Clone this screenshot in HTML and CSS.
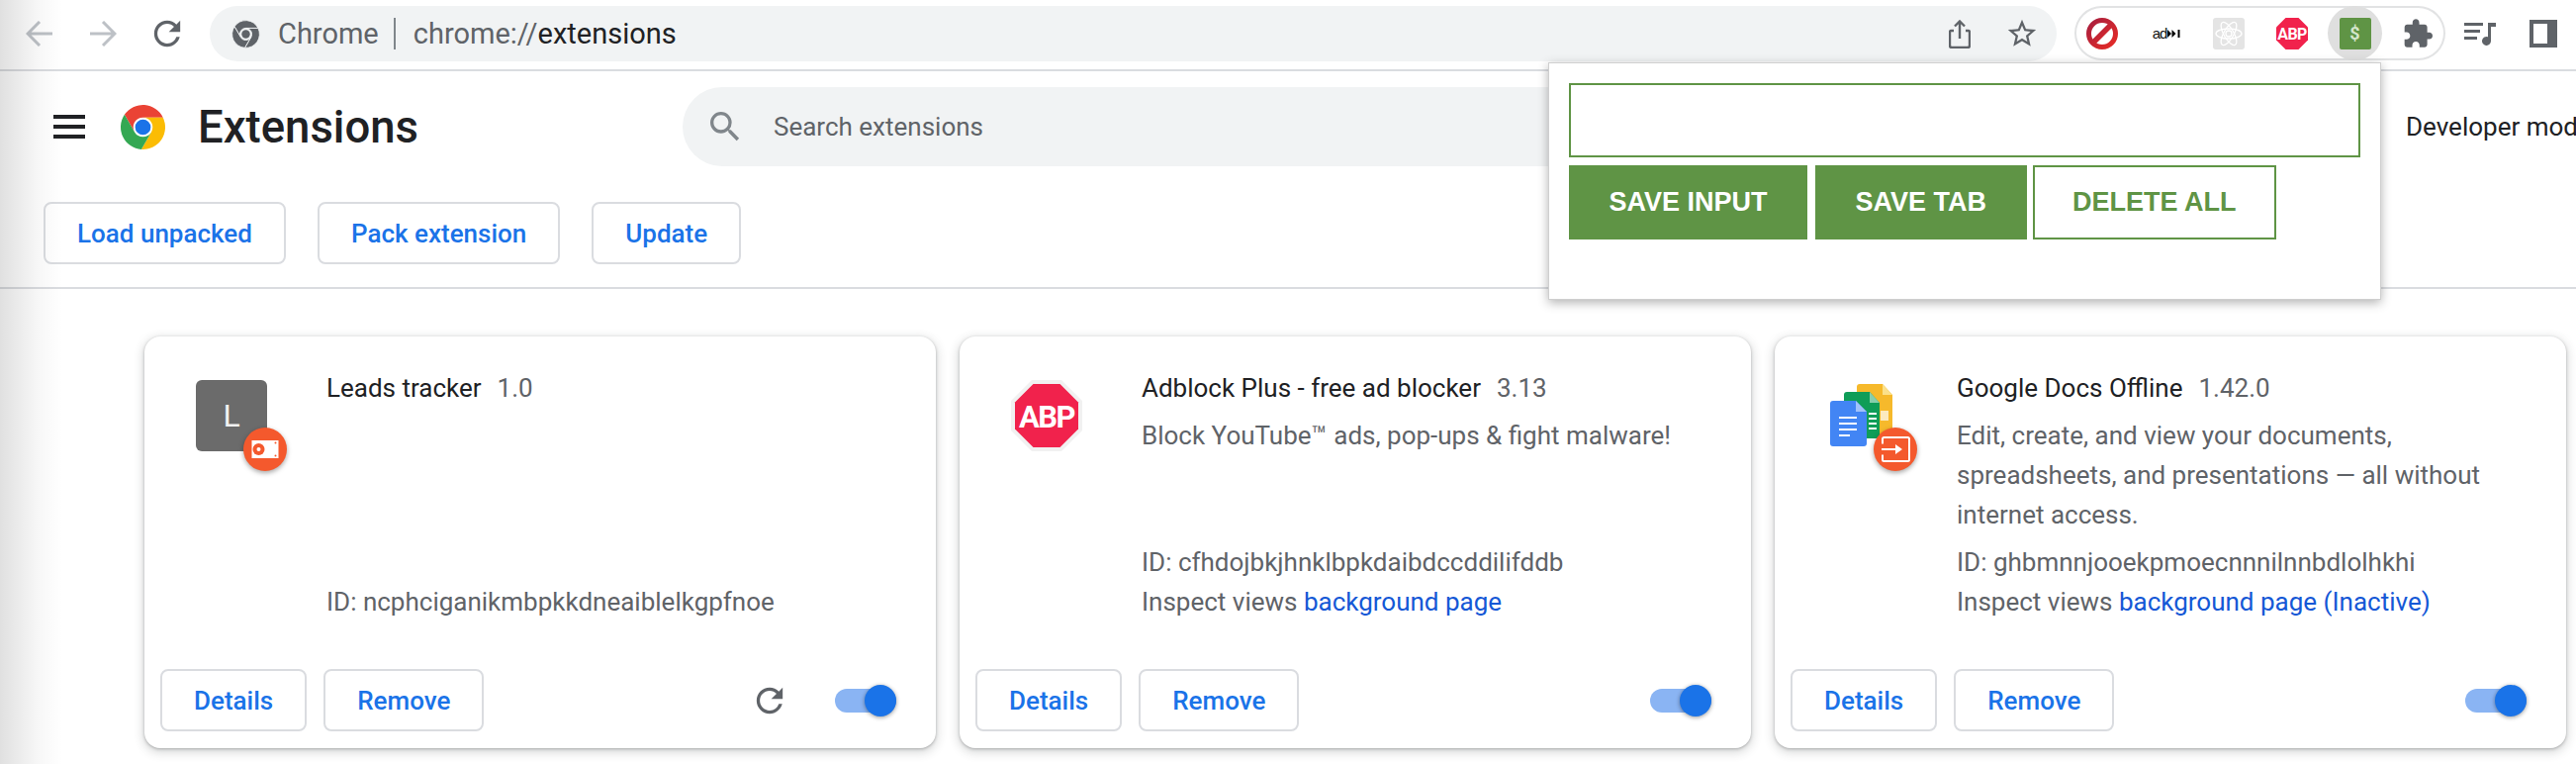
FILE: index.html
```html
<!DOCTYPE html>
<html lang="en">
<head>
<meta charset="utf-8">
<title>Extensions</title>
<link rel="stylesheet" href="styles.css">
</head>
<body>
<div class="edge-shade"></div>

<div class="browser-bar">
  <svg class="nav-icon" viewBox="0 0 28 26"><path class="nav-off" d="M27 13H2M14 1 2 13l12 12"/></svg>
  <svg class="nav-icon nav-forward" viewBox="0 0 28 26"><path class="nav-off" d="M1 13h25M14 1l12 12-12 12"/></svg>
  <svg class="nav-reload" viewBox="3.5 3.5 17 17"><path class="ico" d="M17.65 6.35A7.958 7.958 0 0 0 12 4c-4.42 0-7.99 3.58-7.99 8s3.57 8 7.99 8c3.73 0 6.84-2.55 7.73-6h-2.08A5.99 5.99 0 0 1 12 18c-3.31 0-6-2.69-6-6s2.69-6 6-6c1.66 0 3.14.69 4.22 1.78L13 11h7V4l-2.35 2.35z"/></svg>
  <div class="omnibox">
    <svg class="omni-logo" viewBox="0 0 48 48">
      <path class="omni-seg" d="M5 11.07A23 23 0 0 1 44.7 14H24a10 10 0 0 0-8.66 15z"/>
      <path class="omni-seg" d="M44.7 14A23 23 0 0 1 22.31 46.93L32.66 29A10 10 0 0 0 24 14z"/>
      <path class="omni-seg" d="M22.31 46.93A23 23 0 0 1 5 11.07L15.34 29a10 10 0 0 0 17.32 0z"/>
      <circle class="ico" cx="24" cy="24" r="7"/>
    </svg>
    <span class="omni-site">Chrome</span>
    <span class="omni-sep"></span>
    <span class="omni-url">chrome://<span class="omni-path">extensions</span></span>
    <svg class="omni-share" viewBox="0 0 22 29"><path class="ico-line" d="M5 11H2.5A1.5 1.5 0 0 0 1 12.500V26a2 2 0 0 0 2 2h16a2 2 0 0 0 2-2V12.500A1.500 1.500 0 0 0 19.500 11H17M11 19V2M6 6.500 11 1.500l5 5"/></svg>
    <svg class="omni-star" viewBox="0 0 24 24"><path class="ico" d="m22 9.240-7.190-.62L12 2 9.190 8.630 2 9.240l5.460 4.730L5.820 21 12 17.270 18.180 21l-1.630-7.030L22 9.240zM12 15.400l-3.760 2.270 1-4.280-3.320-2.880 4.380-.38L12 6.100l1.710 4.040 4.380.38-3.320 2.880 1 4.280L12 15.400z"/></svg>
  </div>
  <div class="ext-pill">
    <div class="ext-slot">
      <svg class="ext-icon" viewBox="0 0 32 32">
        <defs><linearGradient id="stopGrad" x1="0" y1="0" x2="1" y2="1"><stop offset="0" stop-color="#a81f3e"/><stop offset="1" stop-color="#e62b26"/></linearGradient></defs>
        <circle cx="16" cy="16" r="13.500" fill="#fff" stroke="url(#stopGrad)" stroke-width="5"/>
        <path d="M7 25 25 7" stroke="url(#stopGrad)" stroke-width="5.500"/>
      </svg>
    </div>
    <div class="ext-slot">
      <span class="adskip">ad<svg class="adskip-arrows" viewBox="0 0 13 8"><path d="M0 0l4 4-4 4zM4.500 0l4 4-4 4zM10.500 0H12.500V8H10.500z"/></svg></span>
    </div>
    <div class="ext-slot">
      <svg class="ext-icon" viewBox="0 0 32 32">
        <rect width="32" height="32" rx="3" fill="#e4e4e4"/>
        <g class="atom"><ellipse cx="16" cy="16" rx="13" ry="5"/><ellipse cx="16" cy="16" rx="13" ry="5" transform="rotate(60 16 16)"/><ellipse cx="16" cy="16" rx="13" ry="5" transform="rotate(120 16 16)"/><circle cx="16" cy="16" r="3"/></g>
      </svg>
    </div>
    <div class="ext-slot">
      <svg class="ext-icon" viewBox="0 0 32 32"><path class="abp-red" d="M9.500 0h13L32 9.500v13L22.500 32h-13L0 22.500v-13z"/><text class="abp-text" x="16" y="22">ABP</text></svg>
    </div>
    <div class="ext-slot ext-slot-active">
      <span class="dollar-tile">$</span>
    </div>
    <div class="ext-slot">
      <svg class="puzzle" viewBox="1.500 1 21.500 21"><path class="ico" d="M20.500 11H19V7c0-1.100-.9-2-2-2h-4V3.500C13 2.120 11.880 1 10.500 1S8 2.120 8 3.500V5H4c-1.100 0-1.990.9-1.990 2v3.800H3.500c1.490 0 2.700 1.210 2.700 2.700s-1.210 2.700-2.700 2.700H2V20c0 1.100.9 2 2 2h3.800v-1.500c0-1.490 1.210-2.700 2.700-2.700 1.490 0 2.700 1.210 2.700 2.700V22H17c1.100 0 2-.9 2-2v-4h1.500c1.380 0 2.500-1.120 2.500-2.500S21.880 11 20.500 11z"/></svg>
    </div>
  </div>
  <svg class="media-icon" viewBox="0 0 32 24"><path class="ico" d="M0 1h19v3H0zM0 8h16v3H0zM0 15h13v3H0zM24 1h8v4h-5v14.500a4.500 4.500 0 1 1-3-4.240z"/></svg>
  <svg class="panel-icon" viewBox="0 0 28 28"><path class="ico" fill-rule="evenodd" d="M0 0h28v28H0zM4 4v20h14V4z"/></svg>
</div>

<header class="page-head">
  <div class="menu-bars"><span></span><span></span><span></span></div>
  <svg class="head-logo" viewBox="0 0 48 48">
    <path fill="#ea4335" d="M5 11.070A23 23 0 0 1 44.700 14H24a10 10 0 0 0-8.660 15z"/>
    <path fill="#fbbc04" d="M44.700 14A23 23 0 0 1 22.310 46.930L32.660 29A10 10 0 0 0 24 14z"/>
    <path fill="#34a853" d="M22.310 46.930A23 23 0 0 1 5 11.070L15.340 29a10 10 0 0 0 17.320 0z"/>
    <circle fill="#1a73e8" cx="24" cy="24" r="8"/>
  </svg>
  <h1 class="page-title">Extensions</h1>
  <div class="search-box">
    <svg class="search-icon" viewBox="3 3 18 18"><path class="search-path" d="M15.500 14h-.79l-.28-.27A6.470 6.470 0 0 0 16 9.500 6.500 6.500 0 1 0 9.500 16c1.610 0 3.090-.59 4.230-1.570l.27.28v.79l5 4.990L20.490 19l-4.990-5zm-6 0C7.010 14 5 11.990 5 9.500S7.010 5 9.500 5 14 7.010 14 9.500 11.990 14 9.500 14z"/></svg>
    <span class="search-text">Search extensions</span>
  </div>
  <span class="dev-mode">Developer mode</span>
</header>

<div class="action-row">
  <button class="btn">Load unpacked</button>
  <button class="btn">Pack extension</button>
  <button class="btn">Update</button>
</div>

<main class="card-row">
  <article class="card">
    <div class="card-main">
      <div class="card-icon">
        <div class="letter-tile">L</div>
        <span class="badge">
          <svg class="badge-svg" viewBox="0 0 44 44"><path fill="#fff" d="M8.500 13h27v18h-27z"/><circle cx="15.500" cy="22" r="6" fill="#f4592d"/><circle cx="15.500" cy="22" r="2" fill="#fff"/><circle cx="32.500" cy="15.500" r="1" fill="#f4592d"/><circle cx="32.500" cy="28.500" r="1" fill="#f4592d"/></svg>
        </span>
      </div>
      <div class="card-text">
        <div class="card-name"><span class="name">Leads tracker</span><span class="version">1.0</span></div>
        <div class="card-meta">
          <div>ID: ncphciganikmbpkkdneaiblelkgpfnoe</div>
        </div>
      </div>
    </div>
    <div class="card-foot">
      <button class="btn">Details</button>
      <button class="btn">Remove</button>
      <svg class="foot-reload" viewBox="3.500 3.500 17 17"><path class="ico" d="M17.650 6.350A7.958 7.958 0 0 0 12 4c-4.420 0-7.990 3.580-7.990 8s3.570 8 7.990 8c3.730 0 6.840-2.550 7.730-6h-2.080A5.990 5.990 0 0 1 12 18c-3.310 0-6-2.690-6-6s2.690-6 6-6c1.660 0 3.140.69 4.220 1.780L13 11h7V4l-2.350 2.350z"/></svg>
      <span class="toggle toggle-after-reload"><span class="toggle-knob"></span></span>
    </div>
  </article>

  <article class="card">
    <div class="card-main">
      <div class="card-icon">
        <svg class="abp-big" viewBox="0 0 72 72"><path fill="#f1f1f1" d="M21 0h30l21 21v30L51 72H21L0 51V21z"/><path class="abp-red" d="M22.500 4h27L68 22.500v27L49.500 68h-27L4 49.500v-27z"/><text class="abp-text-big" x="36" y="47.500">ABP</text></svg>
      </div>
      <div class="card-text">
        <div class="card-name"><span class="name">Adblock Plus - free ad blocker</span><span class="version">3.13</span></div>
        <div class="card-desc">Block YouTube™ ads, pop-ups &amp; fight malware!</div>
        <div class="card-meta">
          <div>ID: cfhdojbkjhnklbpkdaibdccddilifddb</div>
          <div>Inspect views <a class="link">background page</a></div>
        </div>
      </div>
    </div>
    <div class="card-foot">
      <button class="btn">Details</button>
      <button class="btn">Remove</button>
      <span class="toggle"><span class="toggle-knob"></span></span>
    </div>
  </article>

  <article class="card">
    <div class="card-main">
      <div class="card-icon">
        <svg class="docs-svg" viewBox="-4 0 72 72">
          <path fill="#f6b92b" d="M30 4h23l10 11v37a3 3 0 0 1-3 3H30a3 3 0 0 1-3-3V7a3 3 0 0 1 3-3z"/>
          <path fill="#fbe08a" d="M53 4l10 11H53z"/>
          <path fill="#fff" opacity=".7" d="M51 31h8v10h-8z"/>
          <path fill="#0f9d58" d="M17 12h23l10 11v33a3 3 0 0 1-3 3H17a3 3 0 0 1-3-3V15a3 3 0 0 1 3-3z"/>
          <path fill="#87ceac" d="M40 12l10 11H40z"/>
          <path fill="#fff" d="M39 33h8v2H39zM39 38h8v2H39zM39 43h8v2H39zM39 48h8v2H39z"/>
          <path fill="#4285f4" d="M3 21h23l11 11v32a3 3 0 0 1-3 3H3a3 3 0 0 1-3-3V24a3 3 0 0 1 3-3z"/>
          <path fill="#a1c2fa" d="M26 21l11 11H26z"/>
          <path fill="#fff" d="M9 37h18v2H9zM9 43h18v2H9zM9 49h18v2H9zM9 55h11v2H9z"/>
        </svg>
        <span class="badge">
          <svg class="badge-svg" viewBox="0 0 44 44"><path fill="none" stroke="#fff" stroke-width="2" d="M9 16.500V11.500A1.500 1.500 0 0 1 10.500 10h24a1.500 1.500 0 0 1 1.500 1.500v21a1.500 1.500 0 0 1-1.500 1.500h-24A1.500 1.500 0 0 1 9 32.500v-5"/><path fill="#fff" d="M8 21h14v-4l7 5-7 5v-4H8z"/></svg>
        </span>
      </div>
      <div class="card-text">
        <div class="card-name"><span class="name">Google Docs Offline</span><span class="version">1.42.0</span></div>
        <div class="card-desc">Edit, create, and view your documents, spreadsheets, and presentations — all without internet access.</div>
        <div class="card-meta">
          <div>ID: ghbmnnjooekpmoecnnnilnnbdlolhkhi</div>
          <div>Inspect views <a class="link">background page (Inactive)</a></div>
        </div>
      </div>
    </div>
    <div class="card-foot">
      <button class="btn">Details</button>
      <button class="btn">Remove</button>
      <span class="toggle"><span class="toggle-knob"></span></span>
    </div>
  </article>
</main>

<div class="popup">
  <input class="popup-input" type="text">
  <div class="popup-actions">
    <button class="popup-btn popup-btn-input">SAVE INPUT</button>
    <button class="popup-btn">SAVE TAB</button>
    <button class="popup-btn popup-btn-outline">DELETE ALL</button>
  </div>
</div>
</body>
</html>
```

FILE: styles.css
```css
* { box-sizing: border-box; }

html, body {
  margin: 0;
  height: 772px;
  overflow: hidden;
  background: #fff;
}

body {
  position: relative;
  width: 2604px;
  font-family: Roboto, "Liberation Sans", sans-serif;
  font-size: 26px;
  color: #202124;
}

.edge-shade {
  position: absolute;
  left: 0;
  top: 0;
  bottom: 0;
  width: 64px;
  background: linear-gradient(to right, rgba(0,0,0,.12), rgba(0,0,0,.03) 60%, rgba(0,0,0,0));
  pointer-events: none;
  z-index: 5;
}

.ico { fill: #5f6368; }
.ico-line { fill: none; stroke: #5f6368; stroke-width: 2.4; }

/* Browser bar */
.browser-bar {
  display: flex;
  align-items: flex-start;
  height: 72px;
  padding-left: 26px;
  border-bottom: 2px solid #dadce0;
}

.nav-icon { width: 28px; height: 26px; margin-top: 21px; flex: none; }
.nav-forward { margin-left: 36px; }
.nav-off { fill: none; stroke: #bdc1c6; stroke-width: 3; }
.nav-reload { width: 28px; height: 28px; margin: 20px 0 0 37px; flex: none; }

.omnibox {
  display: flex;
  align-items: center;
  flex: none;
  width: 1867px;
  height: 56px;
  margin: 6px 0 0 29px;
  padding: 0 21px 0 22px;
  border-radius: 28px;
  background: #f1f3f4;
  font-size: 29px;
  color: #5f6368;
}

.omni-logo { width: 29px; height: 29px; flex: none; }
.omni-seg { fill: #5f6368; stroke: #f1f3f4; stroke-width: 1.5; }
.omni-site { margin-left: 18px; }
.omni-sep { width: 2px; height: 32px; margin: 0 18px 0 15px; background: #80868b; }
.omni-path { color: #202124; }
.omni-share { width: 22px; height: 29px; margin-left: auto; }
.omni-star { width: 34px; height: 34px; margin-left: 35px; margin-right: -3px; }

.ext-pill {
  display: flex;
  gap: 9px;
  flex: none;
  height: 55px;
  width: 375px;
  margin: 6px 0 0 18px;
  border-radius: 28px;
  box-shadow: inset 0 0 0 2px #e2e3e4;
}

.ext-slot {
  display: flex;
  align-items: center;
  justify-content: center;
  width: 55px;
  height: 55px;
  flex: none;
}

.ext-slot-active { border-radius: 50%; background: #dfdfdf; }
.ext-icon { width: 32px; height: 32px; }

.adskip {
  display: flex;
  align-items: center;
  margin-left: 3px;
  font: 15px/1 "Liberation Sans", sans-serif;
  letter-spacing: -1px;
  color: #111;
}

.adskip-arrows { width: 13px; height: 8px; margin-left: 1px; }
.atom { fill: none; stroke: #fff; stroke-width: 1.300; }
.abp-red { fill: #f1224c; }

.abp-text {
  fill: #fff;
  font: 700 16px Roboto, sans-serif;
  letter-spacing: -.6px;
  text-anchor: middle;
}

.dollar-tile {
  display: flex;
  align-items: center;
  justify-content: center;
  width: 32px;
  height: 32px;
  border-radius: 2px;
  background: #5f9445;
  color: #d5e6cb;
  font: 700 18px Roboto, sans-serif;
}

.puzzle { width: 29px; height: 29px; }
.media-icon { width: 32px; height: 24px; margin: 22px 0 0 19px; flex: none; }
.panel-icon { width: 28px; height: 28px; margin: 20px 0 0 34px; flex: none; }

/* Page head */
.page-head {
  display: flex;
  align-items: center;
  height: 112px;
  padding-left: 54px;
  white-space: nowrap;
}

.menu-bars {
  display: flex;
  flex-direction: column;
  justify-content: space-between;
  width: 32px;
  height: 24px;
  flex: none;
}

.menu-bars span { display: block; height: 4px; background: #202124; }
.head-logo { width: 47px; height: 47px; margin-left: 35px; flex: none; }

.page-title {
  margin: 0 0 0 32px;
  width: 490px;
  flex: none;
  font-size: 45.500px;
  font-weight: 500;
  color: #202124;
}

.search-box {
  display: flex;
  align-items: center;
  flex: none;
  width: 1224px;
  height: 80px;
  padding-left: 28px;
  border-radius: 40px;
  background: #f1f3f4;
}

.search-icon { width: 30px; height: 30px; }
.search-path { fill: #80868b; }
.search-text { margin-left: 34px; color: #5f6368; }
.dev-mode { margin-left: 518px; flex: none; }

/* Buttons */
.btn {
  height: 63px;
  padding: 0 32px;
  flex: none;
  border: 2px solid #dadce0;
  border-radius: 8px;
  background: #fff;
  color: #1a73e8;
  font: 500 26px Roboto, sans-serif;
}

.action-row {
  display: flex;
  gap: 32px;
  margin-top: 20px;
  padding: 0 0 23px 44px;
  border-bottom: 2px solid #dadce0;
}

/* Cards */
.card-row {
  display: flex;
  gap: 24px;
  margin-top: 48px;
  padding-left: 146px;
}

.card {
  display: flex;
  flex-direction: column;
  flex: none;
  width: 800px;
  height: 416px;
  border-radius: 16px;
  background: #fff;
  box-shadow: 0 1px 3px rgba(60,64,67,.35), 0 3px 10px 2px rgba(60,64,67,.18);
}

.card-main {
  display: flex;
  flex: 1;
  min-height: 0;
  padding: 32px 40px 48px 52px;
}

.card-icon {
  position: relative;
  flex: none;
  width: 72px;
  height: 72px;
  margin: 12px 60px 0 0;
}

.letter-tile {
  display: flex;
  align-items: center;
  justify-content: center;
  width: 72px;
  height: 72px;
  border-radius: 6px;
  background: #6b6b6b;
  color: #f1f1f1;
  font-size: 32px;
}

.badge {
  position: absolute;
  left: 48px;
  top: 48px;
  width: 44px;
  height: 44px;
  border-radius: 50%;
  background: #f4592d;
  box-shadow: 0 2px 5px rgba(0,0,0,.35);
}

.badge-svg { display: block; width: 44px; height: 44px; }
.abp-big { display: block; width: 72px; height: 72px; }

.abp-text-big {
  fill: #fff;
  font: 700 31px Roboto, sans-serif;
  letter-spacing: -1.500px;
  text-anchor: middle;
}

.docs-svg { display: block; width: 72px; height: 72px; }

.card-text {
  display: flex;
  flex-direction: column;
  flex: 1;
  min-width: 0;
  line-height: 40px;
  color: #5f6368;
}

.name { color: #202124; }
.version { margin-left: 16px; }
.card-desc { margin-top: 8px; }
.card-meta { margin-top: auto; }
.link { color: #1558d6; }

.card-foot {
  display: flex;
  align-items: center;
  gap: 17px;
  flex: none;
  padding: 0 40px 17px 16px;
}

.foot-reload { width: 28px; height: 28px; margin-left: auto; flex: none; }

.toggle {
  position: relative;
  flex: none;
  width: 62px;
  height: 24px;
  margin-left: auto;
  border-radius: 12px;
  background: #8ab4f3;
}

.toggle-after-reload { margin-left: 35px; }

.toggle-knob {
  position: absolute;
  right: 0;
  top: -4px;
  width: 32px;
  height: 32px;
  border-radius: 50%;
  background: #1a73e8;
  box-shadow: 0 1px 4px rgba(0,0,0,.4);
}

/* Popup */
.popup {
  position: absolute;
  left: 1565px;
  top: 63px;
  width: 842px;
  height: 240px;
  padding: 20px;
  border: 1px solid #cfcfcf;
  background: #fff;
  box-shadow: 0 3px 10px rgba(0,0,0,.3);
  z-index: 10;
}

.popup-input {
  display: block;
  width: 800px;
  height: 75px;
  padding: 0;
  border: 2px solid #5f9445;
  border-radius: 0;
  background: #fff;
  outline: none;
}

.popup-actions { display: flex; gap: 6px; margin-top: 8px; }

.popup-btn {
  height: 75px;
  padding: 0 38.500px;
  flex: none;
  border: 2px solid #5f9445;
  border-radius: 0;
  background: #5f9445;
  color: #fff;
  font: 700 27px "Liberation Sans", sans-serif;
}

.popup-btn-input { margin-right: 2px; }
.popup-btn-outline { background: #fff; color: #5f9445; }
```
